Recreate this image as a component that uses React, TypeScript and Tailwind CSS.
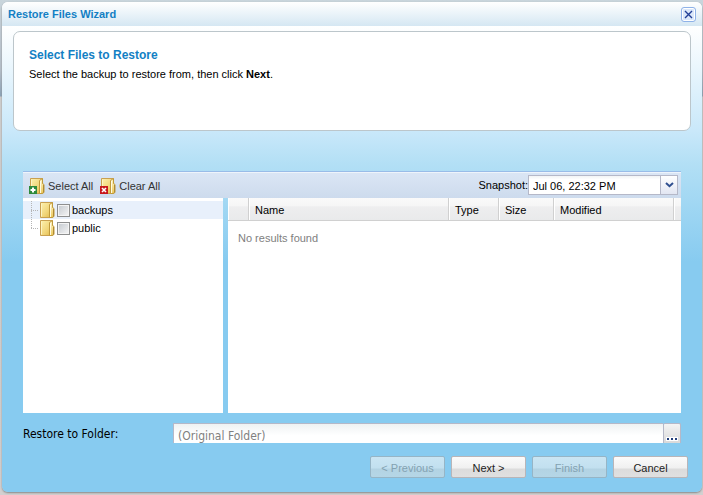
import React from "react";

function Folder({ badge }: { badge?: "add" | "clear" }) {
  return (
    <svg width="18" height="18" viewBox="0 0 18 18" className="shrink-0" aria-hidden="true">
      <defs>
        <linearGradient id="back" x1="0" y1="0" x2="1" y2="1">
          <stop offset="0" stopColor="#fdf2b0" />
          <stop offset="0.6" stopColor="#f0d478" />
          <stop offset="1" stopColor="#dfb640" />
        </linearGradient>
        <linearGradient id="front" x1="0" y1="0" x2="0" y2="1">
          <stop offset="0" stopColor="#fff6c8" />
          <stop offset="1" stopColor="#ecc95c" />
        </linearGradient>
      </defs>
      <path d="M1.5 1.5h12v15h-12z" fill="url(#back)" stroke="#c9a050" />
      <path d="M2.5 2.5v13" stroke="#fdf4c4" />
      <path d="M10.5 16.5v-13l3-2v5l1.5 1v8l-2 1z" fill="url(#front)" stroke="#c09a3c" />
      <path d="M11.5 4v12" stroke="#fffbe4" />
      <path d="M14.5 8v7.5" stroke="#b08a34" />
      {badge === "add" && (
        <g>
          <rect x="0" y="9" width="8" height="8" fill="#2f8a3c" />
          <path d="M4 10.5v5M1.5 13h5" stroke="#fff" strokeWidth="2" />
        </g>
      )}
      {badge === "clear" && (
        <g>
          <rect x="0" y="9" width="8" height="8" fill="#c8171c" />
          <path d="M2 11l4 4M6 11l-4 4" stroke="#fff" strokeWidth="1.6" />
        </g>
      )}
    </svg>
  );
}

function TreeItem({ name, last, active }: { name: string; last?: boolean; active?: boolean }) {
  return (
    <li className={`flex h-[18px] items-center pl-2 ${active ? "bg-[#e8f0fb]" : ""}`}>
      <svg width="8" height="18" viewBox="0 0 8 18" className="shrink-0" aria-hidden="true">
        <path d={last ? "M.5 0v9" : "M.5 0v18"} stroke="#b5b5b5" strokeDasharray="1 1" />
        <path d="M0 9.5h8" stroke="#b5b5b5" strokeDasharray="1 1" />
      </svg>
      <Folder />
      <label className="flex items-center">
        <input
          type="checkbox"
          className="m-0 h-[13px] w-[13px] appearance-none border border-[#8e8f8f] bg-gradient-to-br from-[#c4c9cf] to-[#f6f6f6] shadow-[inset_0_0_0_1px_#f4f4f4]"
        />
        <span className="pl-[2px]">{name}</span>
      </label>
    </li>
  );
}

function WizardButton({ children, disabled }: { children: React.ReactNode; disabled?: boolean }) {
  return (
    <button
      type="button"
      disabled={disabled}
      className="h-[22px] w-[75px] rounded-[2px] border border-[#b9b5b8] bg-[linear-gradient(#fbfbfb_0%,#f0f0f0_55%,#dcdcdc_60%,#e0e0e0_100%)] pt-px text-[#222] disabled:border-[#96b5c6] disabled:bg-[linear-gradient(#cae5f3_0%,#c2e0ef_55%,#b3d3e3_60%,#b5d6e6_100%)] disabled:text-[#83a2b1]"
    >
      {children}
    </button>
  );
}

const cell =
  "border-b border-[#d0d0d0] bg-[linear-gradient(#fafafa_0%,#f6f6f6_36%,#eeeeef_40%,#e9eaeb_100%)] text-left font-normal shadow-[inset_1px_0_0_#fff]";
const head = `${cell} border-r px-[6px] pt-px`;

export default function App() {
  return (
    <div className="flex min-h-screen flex-col bg-[#ccd6dc] bg-[linear-gradient(#c9d5dc_0px,#b5bfca_70px,#8ba3b7_96px,#cfcfcf_97px,#d2d0d0_100%)] pt-[2px] pr-px pb-[3px] pl-[2px] font-['Liberation_Sans',Arial,sans-serif] text-[11px] leading-[14px] text-black">
      <main className="flex grow flex-col overflow-hidden rounded-[6px] bg-[linear-gradient(#fff_24px,#c9e8fa_129px,#b2dff5_163px,#87cbf0_260px)] shadow-[0_1px_2px_#888]">
        <header className="flex h-6 items-center justify-between bg-gradient-to-b from-white to-[#d5e7f3] px-[6px]">
          <h1 className="font-bold text-[#137fc4]">Restore Files Wizard</h1>
          <button
            type="button"
            aria-label="Close"
            className="flex h-[15px] w-[15px] items-center justify-center rounded-[3px] border border-[#8fb2e8] bg-[#dbe8fa] shadow-[inset_0_0_0_1px_#fff]"
          >
            <svg width="9" height="9" viewBox="0 0 9 9" aria-hidden="true">
              <path d="M1 1l7 7M8 1l-7 7" stroke="#233f96" strokeWidth="1.4" />
            </svg>
          </button>
        </header>

        <section className="mx-[11px] mt-[5px] h-[100px] rounded-[7px] border border-[#bcc6cb] bg-white px-[15px] pt-4">
          <h2 className="text-[12px] leading-[14px] font-bold text-[#137fc4]">Select Files to Restore</h2>
          <p className="pt-[5px]">
            Select the backup to restore from, then click <b>Next</b>.
          </p>
        </section>

        <section className="mx-[21px] mt-10 flex grow flex-col">
          <div className="flex h-[27px] items-center border-t border-[#99bce8] bg-gradient-to-b from-[#dbe6f5] to-[#cddbed] pr-[3px] pl-[6px] shadow-[inset_0_1px_0_#eef4fb]">
            <button type="button" className="flex items-center gap-px pt-px text-[#333]">
              <Folder badge="add" />
              Select All
            </button>
            <button type="button" className="ml-[7px] flex items-center gap-px pt-px text-[#333]">
              <Folder badge="clear" />
              Clear All
            </button>
            <label htmlFor="snapshot" className="ml-auto">
              Snapshot:
            </label>
            <div className="relative flex">
              <select
                id="snapshot"
                className="h-5 w-[150px] appearance-none border border-[#b5b8c8] bg-white bg-gradient-to-b from-[#f2f4f5] to-white to-20% pt-px pl-1"
              >
                <option>Jul 06, 22:32 PM</option>
              </select>
              <span className="pointer-events-none absolute top-0 right-0 flex h-5 w-[18px] items-center justify-center border border-[#b5b8c8] bg-gradient-to-b from-white to-[#e2e6f2]">
                <svg width="9" height="6" viewBox="0 0 9 6" aria-hidden="true">
                  <path d="M1 1l3.5 3.2L8 1" fill="none" stroke="#2f4f8f" strokeWidth="2" />
                </svg>
              </span>
            </div>
          </div>

          <div className="flex grow gap-[5px]">
            <ul className="w-[200px] shrink-0 bg-white pt-[3px]">
              <TreeItem name="backups" active />
              <TreeItem name="public" last />
            </ul>
            <div className="grow bg-white">
              <table className="w-full table-fixed border-separate border-spacing-0">
                <thead>
                  <tr className="h-[23px]">
                    <th className={`w-[21px] ${head}`} />
                    <th className={head}>Name</th>
                    <th className={`w-[50px] ${head}`}>Type</th>
                    <th className={`w-[55px] ${head}`}>Size</th>
                    <th className={`w-[120px] ${head}`}>Modified</th>
                    <th className={`w-[7px] p-0 ${cell}`} />
                  </tr>
                </thead>
                <tbody>
                  <tr>
                    <td colSpan={6} className="px-[10px] pt-[10px] text-[#808080]">
                      No results found
                    </td>
                  </tr>
                </tbody>
              </table>
            </div>
          </div>
        </section>

        <div className="mx-[21px] mt-[10px] flex h-5 items-center font-['DejaVu_Sans_Condensed','Noto_Sans',Tahoma,sans-serif] text-[12px]">
          <label htmlFor="folder" className="w-[150px] shrink-0 pt-[2px]">
            Restore to Folder:
          </label>
          <input
            id="folder"
            type="text"
            placeholder="(Original Folder)"
            className="h-5 min-w-0 grow border-t border-l border-[#b5b8c8] bg-white bg-gradient-to-b from-[#eff2f3] to-white to-60% px-1 pt-1 placeholder:text-[#808080]"
          />
          <button
            type="button"
            aria-label="Browse"
            className="flex h-5 w-[18px] items-end justify-center rounded-t-[2px] border border-b-0 border-[#b5b8c8] bg-gradient-to-b from-[#f4f4f4] to-[#d9d9d9] pb-[2px]"
          >
            <svg width="12" height="4" viewBox="0 0 12 4" aria-hidden="true">
              <path d="M0 0h12v4H0z" fill="#fff" />
              <path d="M1 1h2v2H1zM5 1h2v2H5zM9 1h2v2H9z" fill="#23407c" />
            </svg>
          </button>
        </div>

        <footer className="flex justify-end gap-[6px] pt-[13px] pr-[14px] pb-[14px]">
          <WizardButton disabled>&lt; Previous</WizardButton>
          <WizardButton>Next &gt;</WizardButton>
          <WizardButton disabled>Finish</WizardButton>
          <WizardButton>Cancel</WizardButton>
        </footer>
      </main>
    </div>
  );
}
